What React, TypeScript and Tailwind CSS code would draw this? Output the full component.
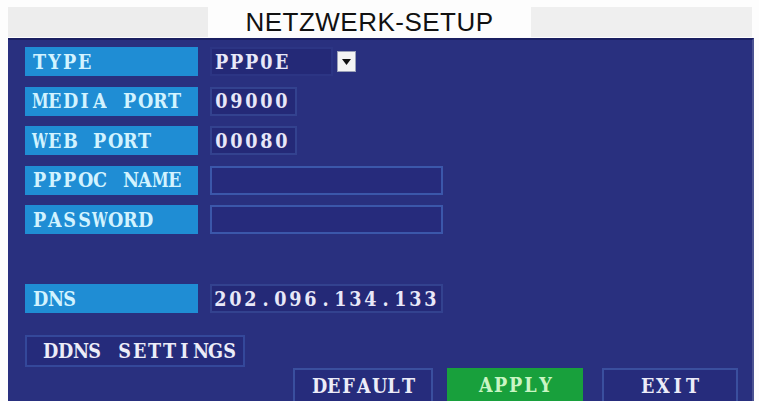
import React from 'react';

// OSD font: every glyph sits in a fixed 15px cell, like the DVR's on-screen font.
// The wide letters get a smaller size, stretched back up, so they stay in their cell.
function cellClass(c: string) {
  if (c === 'W') return 'inline-block w-[15px] text-center text-[14px] scale-y-[1.43] origin-[50%_85%]';
  if (c === 'M') return 'inline-block w-[15px] text-center text-[15px] scale-y-[1.33] origin-[50%_85%]';
  return 'inline-block w-[15px] text-center scale-x-[0.88]';
}

function Osd({ text }: { text: string }) {
  return (
    <span className="whitespace-pre">
      {text.split('').map((c, i) => (
        <span key={i} className={cellClass(c)}>{c}</span>
      ))}
    </span>
  );
}

type Row = { label: string; value?: string; box: string; select?: boolean };

const rows: Row[] = [
  { label: 'TYPE', value: 'PPP0E', box: 'w-[123px] bg-[#242977] border-[#2c3584]', select: true },
  { label: 'MEDIA PORT', value: '09000', box: 'w-[87px] bg-[#242977] border-[#33428f]' },
  { label: 'WEB PORT', value: '00080', box: 'w-[87px] bg-[#242977] border-[#33428f]' },
  { label: 'PPPOC NAME', box: 'w-[233px] bg-[#262b7c] border-[#3b57aa]' },
  { label: 'PASSWORD', box: 'w-[233px] bg-[#262b7c] border-[#3b57aa]' },
];

const osdFont = "font-['DejaVu_Serif',serif] font-bold text-[20px] leading-none";

function LabelCell({ label }: { label: string }) {
  return (
    <div className="w-[173px] h-full bg-[#1f8dd4] flex items-center pl-[7px] text-[#d2f3ff]">
      <Osd text={label} />
    </div>
  );
}

export default function App() {
  return (
    <div className="w-[759px] h-[401px] bg-[#fdfdfd] overflow-hidden flex flex-col">
      {/* Kopfzeile */}
      <div className="h-[38px] flex items-start pt-[7px]">
        <div className="ml-[8px] w-[200px] h-[30px] bg-[#ededed]" />
        <div className="flex-1 h-[30px] flex items-center justify-center font-['Liberation_Sans',Arial,sans-serif] text-[26px] text-[#111] tracking-[0.5px]">
          NETZWERK-SETUP
        </div>
        <div className="mr-[7px] w-[221px] h-[30px] bg-[#efefef]" />
      </div>

      {/* Panel */}
      <div className={`flex-1 ml-[8px] mr-[5px] bg-[#29307f] border-t-2 border-[#1b2062] border-r-2 border-r-[#4b5392] pl-[17px] pt-[7px] flex flex-col ${osdFont}`}>
        <div className="flex flex-col gap-[10.5px]">
          {rows.map(r => (
            <div key={r.label} className="h-[29px] flex items-stretch">
              <LabelCell label={r.label} />
              <div className={`ml-[12px] h-full border-2 flex items-center pl-[2px] text-[#e8e8f8] ${r.box}`}>
                {r.value && <Osd text={r.value} />}
              </div>
              {r.select && (
                <div className="ml-[4px] self-center w-[19px] h-[21px] bg-[#f4f4f4] border border-[#9aa0b8] flex items-center justify-center">
                  <svg width="9" height="6" viewBox="0 0 9 6">
                    <path d="M0 0h9L4.5 6z" fill="#111" />
                  </svg>
                </div>
              )}
            </div>
          ))}
          <div className="h-[29px]" />
          <div className="h-[29px] flex items-stretch">
            <LabelCell label="DNS" />
            <div className="ml-[12px] w-[233px] h-full border-2 border-[#33428f] bg-[#242977] flex items-center pl-px text-[#e8e8f8]">
              <Osd text="202.096.134.133" />
            </div>
          </div>
        </div>

        <div className="mt-[22px] w-[220px] h-[32px] border-2 border-[#34489a] bg-[#252b7b] flex items-center pl-[15px] text-[#ececf8]">
          <Osd text="DDNS SETTINGS" />
        </div>

        <div className="mt-px flex-1 flex items-stretch pl-[268px]">
          <div className="w-[140px] border-2 border-b-0 border-[#3a4f9e] bg-[#262c7c] flex items-center justify-center text-[#ececf8]">
            <Osd text="DEFAULT" />
          </div>
          <div className="ml-[14px] w-[136px] bg-[#18a03c] flex items-center justify-center text-[#c9f5c4]">
            <Osd text="APPLY" />
          </div>
          <div className="ml-[19px] w-[136px] border-2 border-b-0 border-[#3a4f9e] bg-[#262c7c] flex items-center justify-center text-[#ececf8]">
            <Osd text="EXIT" />
          </div>
        </div>
      </div>
    </div>
  );
}
